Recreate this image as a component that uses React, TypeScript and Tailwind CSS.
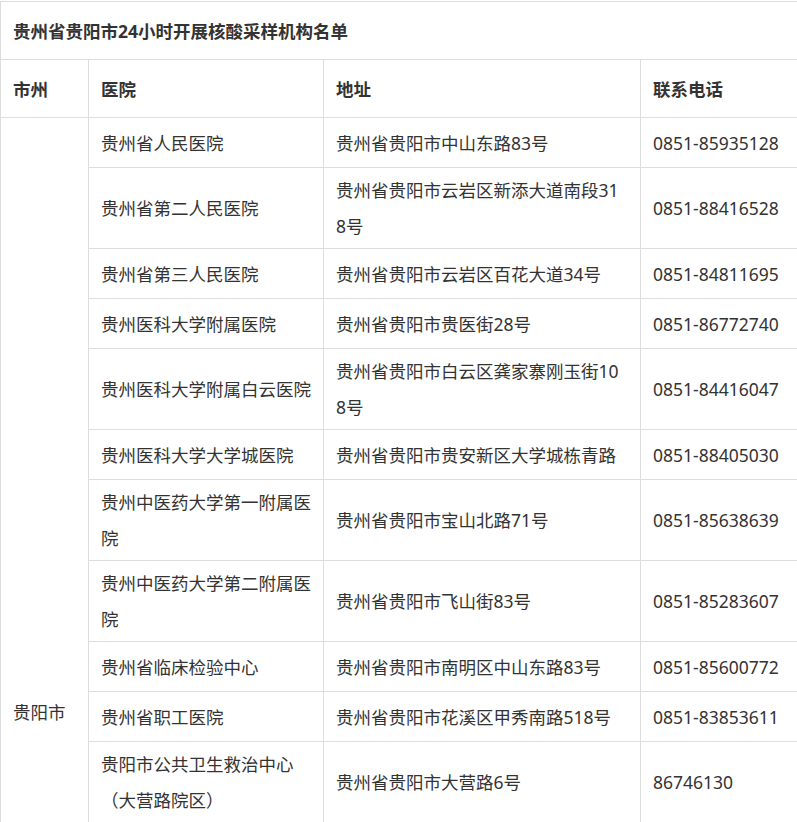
import React from "react";

type Row = { hospital: string[]; address: string[]; phone: string };

const rows: Row[] = [
  { hospital: ["贵州省人民医院"], address: ["贵州省贵阳市中山东路83号"], phone: "0851-85935128" },
  { hospital: ["贵州省第二人民医院"], address: ["贵州省贵阳市云岩区新添大道南段31", "8号"], phone: "0851-88416528" },
  { hospital: ["贵州省第三人民医院"], address: ["贵州省贵阳市云岩区百花大道34号"], phone: "0851-84811695" },
  { hospital: ["贵州医科大学附属医院"], address: ["贵州省贵阳市贵医街28号"], phone: "0851-86772740" },
  { hospital: ["贵州医科大学附属白云医院"], address: ["贵州省贵阳市白云区龚家寨刚玉街10", "8号"], phone: "0851-84416047" },
  { hospital: ["贵州医科大学大学城医院"], address: ["贵州省贵阳市贵安新区大学城栋青路"], phone: "0851-88405030" },
  { hospital: ["贵州中医药大学第一附属医", "院"], address: ["贵州省贵阳市宝山北路71号"], phone: "0851-85638639" },
  { hospital: ["贵州中医药大学第二附属医", "院"], address: ["贵州省贵阳市飞山街83号"], phone: "0851-85283607" },
  { hospital: ["贵州省临床检验中心"], address: ["贵州省贵阳市南明区中山东路83号"], phone: "0851-85600772" },
  { hospital: ["贵州省职工医院"], address: ["贵州省贵阳市花溪区甲秀南路518号"], phone: "0851-83853611" },
  { hospital: ["贵阳市公共卫生救治中心", "（大营路院区）"], address: ["贵州省贵阳市大营路6号"], phone: "86746130" },
];

function Lines({ lines }: { lines: string[] }) {
  return (
    <div className="flex flex-col">
      {lines.map((l, i) => (
        <span key={i} className="whitespace-nowrap">
          {l}
        </span>
      ))}
    </div>
  );
}

const cell =
  "border-r border-b border-[#dddddd] px-3 py-1 min-h-[50px] flex items-center";

export default function App() {
  return (
    <div
      className="w-[797px] overflow-hidden bg-white pt-px text-[#333333] text-[17.5px] leading-[36px]"
      style={{ fontFamily: '"Noto Sans", "Noto Sans CJK SC", sans-serif' }}
    >
      <div className="grid w-[799px] grid-cols-[88px_235px_317px_158px] border-l border-t border-[#dddddd]">
        <div className="col-span-4 flex h-[58px] items-center border-r border-b border-[#dddddd] px-3 font-bold">
          贵州省贵阳市24小时开展核酸采样机构名单
        </div>
        <div className="flex h-[58px] items-center border-r border-b border-[#dddddd] px-3 font-bold">市州</div>
        <div className="flex h-[58px] items-center border-r border-b border-[#dddddd] px-3 font-bold">医院</div>
        <div className="flex h-[58px] items-center border-r border-b border-[#dddddd] px-3 font-bold">地址</div>
        <div className="flex h-[58px] items-center border-r border-b border-[#dddddd] px-3 font-bold">联系电话</div>

        <div className="col-start-1 row-start-3 row-span-11 border-r border-b border-[#dddddd] px-3 pt-[576px]">
          贵阳市
        </div>

        {rows.map((r, i) => (
          <React.Fragment key={i}>
            <div className={`col-start-2 ${cell}`}>
              <Lines lines={r.hospital} />
            </div>
            <div className={`col-start-3 ${cell}`}>
              <Lines lines={r.address} />
            </div>
            <div className={`col-start-4 ${cell}`}>
              <span className="whitespace-nowrap">{r.phone}</span>
            </div>
          </React.Fragment>
        ))}
      </div>
    </div>
  );
}
